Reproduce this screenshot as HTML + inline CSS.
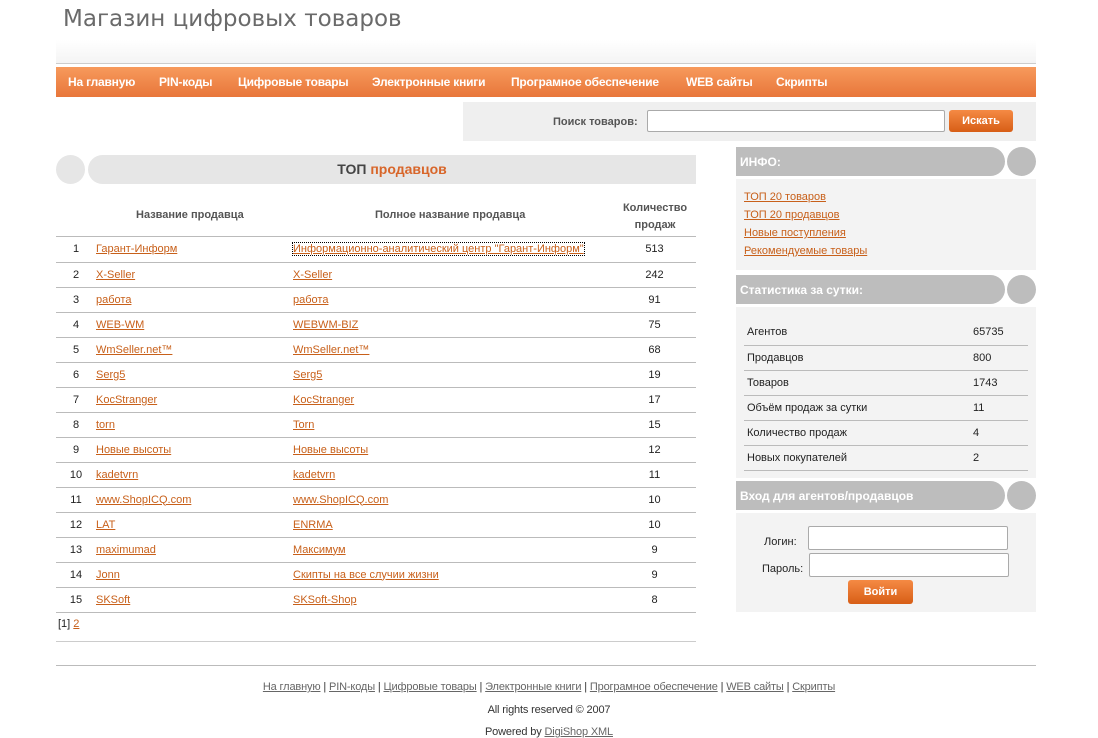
<!DOCTYPE html>
<html><head><meta charset="utf-8"><style>
*{margin:0;padding:0;box-sizing:border-box}
body{width:1098px;height:738px;background:#fff;font-family:"Liberation Sans","DejaVu Sans",sans-serif;font-size:11px;color:#222;position:relative;overflow:hidden}
a{color:#c8601a;text-decoration:underline}
.abs{position:absolute}
.title{left:63px;top:6px;font-family:"DejaVu Sans",sans-serif;font-size:23px;color:#6a6a6a}
.hdrbg{left:56px;top:40px;width:980px;height:24px;background:linear-gradient(#fff,#f4f4f4);border-bottom:1px solid #ccc}
.nav{left:56px;top:67px;width:980px;height:30px;background:linear-gradient(#f79a5c,#e8763a);}
.nav a{color:#fff;text-decoration:none;font-weight:bold;font-size:12px;position:absolute;top:8px;letter-spacing:-0.2px}
.search{left:463px;top:102px;width:573px;height:39px;background:#efefef}
.inp{background:#fff;border:1px solid #aaa;border-radius:2px;position:absolute}
.btn{position:absolute;background:linear-gradient(#f58a44,#d75e16);color:#fff;font-weight:bold;border-radius:3px;text-align:center;font-size:11px}
.circ{position:absolute;border-radius:50%;background:#e6e6e6}
.pill{position:absolute;background:#e6e6e6;border-radius:15px 0 0 15px}
.rbar{position:absolute;left:736px;width:269px;height:29px;background:#bdbdbd;border-radius:0 15px 15px 0;color:#fff;font-weight:bold;font-size:12px;padding:8px 0 0 4px;font-family:"Liberation Sans",sans-serif}
.rcirc{position:absolute;left:1007px;width:29px;height:29px;border-radius:50%;background:#bdbdbd}
.rbox{position:absolute;left:736px;width:300px;background:#f3f3f3}
table{border-collapse:collapse}
.main{position:absolute;left:56px;top:237px;width:640px}
.main td{height:25px;border-bottom:1px solid #bbb;font-size:11px;vertical-align:middle}
.stats{position:absolute;left:744px;top:320px;width:284px}
.stats td{height:25px;border-bottom:1px solid #bbb;padding-left:3px;font-size:11px}
.foot{position:absolute;left:0;width:1098px;text-align:center;font-size:11px;color:#333;letter-spacing:-0.15px}
.foot a{color:#666}
</style></head><body>
<div class="abs hdrbg"></div>
<div class="abs title">Магазин цифровых товаров</div>
<div class="abs nav">
<a style="left:12px">На главную</a><a style="left:103px">PIN-коды</a><a style="left:182px">Цифровые товары</a><a style="left:316px">Электронные книги</a><a style="left:455px">Програмное обеспечение</a><a style="left:630px">WEB сайты</a><a style="left:720px">Скрипты</a>
</div>
<div class="abs search"><span style="position:absolute;left:90px;top:14px;font-weight:bold;color:#555">Поиск товаров:</span>
<div class="inp" style="left:184px;top:8px;width:298px;height:22px"></div>
<div class="btn" style="left:486px;top:8px;width:64px;height:22px;line-height:22px">Искать</div></div>

<div class="circ" style="left:56px;top:155px;width:29px;height:29px"></div>
<div class="pill" style="left:88px;top:155px;width:608px;height:29px"></div>
<div class="abs" style="left:88px;top:161px;width:608px;text-align:center;font-size:14px;font-weight:bold;color:#444">ТОП <span style="color:#d8662a">продавцов</span></div>

<div class="abs" style="left:136px;top:209px;font-weight:bold;color:#555">Название продавца</div>
<div class="abs" style="left:375px;top:209px;font-weight:bold;color:#555">Полное название продавца</div>
<div class="abs" style="left:610px;top:200px;width:90px;text-align:center;font-weight:bold;color:#555;line-height:17px">Количество<br>продаж</div>
<div class="abs" style="left:56px;top:236px;width:640px;border-top:1px solid #bbb"></div>
<table class="main">
<tr><td style="width:40px;text-align:center">1</td><td style="width:197px"><a>Гарант-Информ</a></td><td style="width:320px"><a style="outline:1px dotted #000">Информационно-аналитический центр "Гарант-Информ"</a></td><td style="text-align:center">513</td></tr>
<tr><td style="text-align:center">2</td><td><a>X-Seller</a></td><td><a>X-Seller</a></td><td style="text-align:center">242</td></tr>
<tr><td style="text-align:center">3</td><td><a>работа</a></td><td><a>работа</a></td><td style="text-align:center">91</td></tr>
<tr><td style="text-align:center">4</td><td><a>WEB-WM</a></td><td><a>WEBWM-BIZ</a></td><td style="text-align:center">75</td></tr>
<tr><td style="text-align:center">5</td><td><a>WmSeller.net™</a></td><td><a>WmSeller.net™</a></td><td style="text-align:center">68</td></tr>
<tr><td style="text-align:center">6</td><td><a>Serg5</a></td><td><a>Serg5</a></td><td style="text-align:center">19</td></tr>
<tr><td style="text-align:center">7</td><td><a>KocStranger</a></td><td><a>KocStranger</a></td><td style="text-align:center">17</td></tr>
<tr><td style="text-align:center">8</td><td><a>torn</a></td><td><a>Torn</a></td><td style="text-align:center">15</td></tr>
<tr><td style="text-align:center">9</td><td><a>Новые высоты</a></td><td><a>Новые высоты</a></td><td style="text-align:center">12</td></tr>
<tr><td style="text-align:center">10</td><td><a>kadetvrn</a></td><td><a>kadetvrn</a></td><td style="text-align:center">11</td></tr>
<tr><td style="text-align:center">11</td><td><a>www.ShopICQ.com</a></td><td><a>www.ShopICQ.com</a></td><td style="text-align:center">10</td></tr>
<tr><td style="text-align:center">12</td><td><a>LAT</a></td><td><a>ENRMA</a></td><td style="text-align:center">10</td></tr>
<tr><td style="text-align:center">13</td><td><a>maximumad</a></td><td><a>Максимум</a></td><td style="text-align:center">9</td></tr>
<tr><td style="text-align:center">14</td><td><a>Jonn</a></td><td><a>Скипты на все случии жизни</a></td><td style="text-align:center">9</td></tr>
<tr><td style="text-align:center">15</td><td><a>SKSoft</a></td><td><a>SKSoft-Shop</a></td><td style="text-align:center">8</td></tr>
</table>
<div class="abs" style="left:58px;top:618px">[1] <a>2</a></div>
<div class="abs" style="left:56px;top:641px;width:640px;border-top:1px solid #ccc"></div>

<div class="rbar" style="top:147px">ИНФО:</div><div class="rcirc" style="top:147px"></div>
<div class="rbox" style="top:179px;height:91px;line-height:18px;padding:9px 0 0 8px">
<a>ТОП 20 товаров</a><br><a>ТОП 20 продавцов</a><br><a>Новые поступления</a><br><a>Рекомендуемые товары</a></div>
<div class="rbar" style="top:275px">Статистика за сутки:</div><div class="rcirc" style="top:275px"></div>
<div class="rbox" style="top:307px;height:171px"></div>
<table class="stats">
<tr><td style="width:226px">Агентов</td><td>65735</td></tr>
<tr><td>Продавцов</td><td>800</td></tr>
<tr><td>Товаров</td><td>1743</td></tr>
<tr><td>Объём продаж за сутки</td><td>11</td></tr>
<tr><td>Количество продаж</td><td>4</td></tr>
<tr><td>Новых покупателей</td><td>2</td></tr>
</table>
<div class="rbar" style="top:481px">Вход для агентов/продавцов</div><div class="rcirc" style="top:481px"></div>
<div class="rbox" style="top:513px;height:99px">
<span style="position:absolute;left:28px;top:23px">Логин:</span>
<div class="inp" style="left:72px;top:13px;width:200px;height:24px"></div>
<span style="position:absolute;left:26px;top:50px">Пароль:</span>
<div class="inp" style="left:73px;top:40px;width:200px;height:24px"></div>
<div class="btn" style="left:112px;top:67px;width:65px;height:24px;line-height:24px">Войти</div>
</div>

<div class="abs" style="left:56px;top:665px;width:980px;border-top:1px solid #bbb"></div>
<div class="foot" style="top:681px"><a>На главную</a> | <a>PIN-коды</a> | <a>Цифровые товары</a> | <a>Электронные книги</a> | <a>Програмное обеспечение</a> | <a>WEB сайты</a> | <a>Скрипты</a></div>
<div class="foot" style="top:704px">All rights reserved © 2007</div>
<div class="foot" style="top:726px">Powered by <a>DigiShop XML</a></div>
</body></html>
